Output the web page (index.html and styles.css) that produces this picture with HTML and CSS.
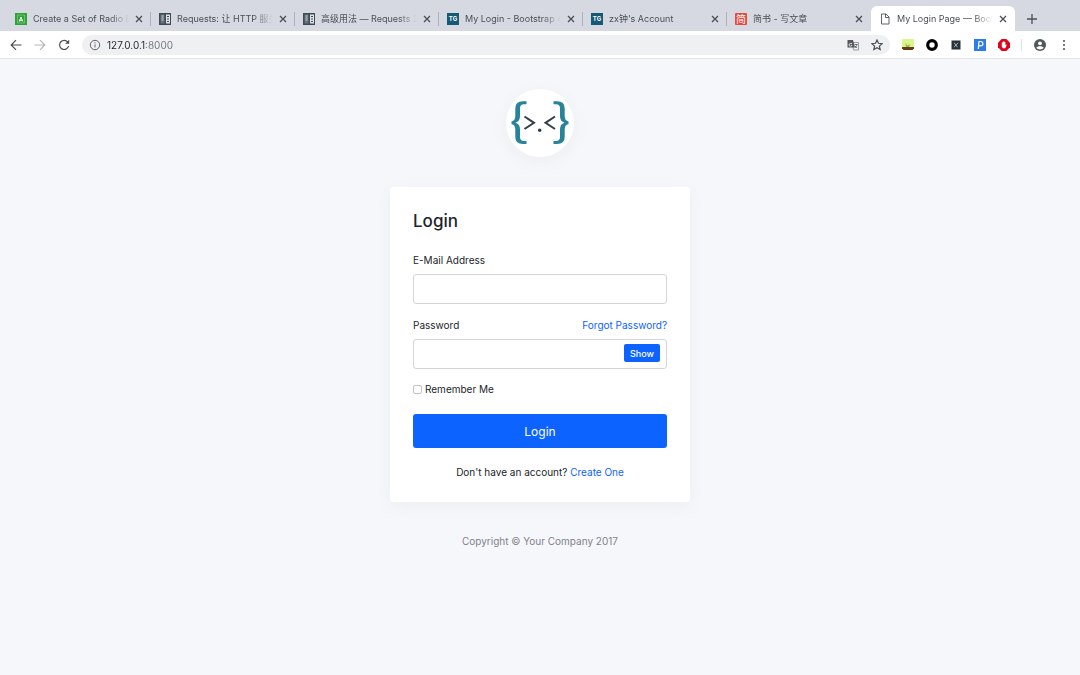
FILE: index.html
```html
<!DOCTYPE html>
<html lang="en">
<head>
<meta charset="utf-8">
<title>My Login Page</title>
<link rel="stylesheet" href="styles.css">
</head>
<body>
<div class="tabs">
	<div class="tab">
		<svg class="favicon" viewBox="0 0 12 12"><rect width="12" height="12" fill="#2fa336"/><path d="M2.500 2h7v8h-7z" fill="none" stroke="#7cc87c" stroke-width=".8"/><path d="M4.300 8.500L6 4l1.700 4.500M4.800 7.300h2.400" fill="none" stroke="#fff"/></svg>
		<a class="name" href="#">Create a Set of Radio Buttons</a>
		<button class="close" aria-label="Close"><svg viewBox="0 0 8 8"><path d="M1 1l6 6M7 1l-6 6"/></svg></button>
	</div>
	<div class="tab">
		<svg class="favicon" viewBox="0 0 12 12"><rect width="12" height="12" fill="#3f4a55"/><path d="M1.500 1.500h4v9h-4z" fill="#64707b"/><path d="M7 1.500h4v9h-4z" fill="#dfe3e7"/><path d="M2.500 3h2M2.500 5h2M2.500 7h2" stroke="#cfd6dc"/><path d="M8 3.500h2M8 6h2M8 8.500h2" stroke="#3f4a55"/></svg>
		<a class="name" href="#">Requests: 让 HTTP 服务人类</a>
		<button class="close" aria-label="Close"><svg viewBox="0 0 8 8"><path d="M1 1l6 6M7 1l-6 6"/></svg></button>
	</div>
	<div class="tab">
		<svg class="favicon" viewBox="0 0 12 12"><rect width="12" height="12" fill="#3f4a55"/><path d="M1.500 1.500h4v9h-4z" fill="#64707b"/><path d="M7 1.500h4v9h-4z" fill="#dfe3e7"/><path d="M2.500 3h2M2.500 5h2M2.500 7h2" stroke="#cfd6dc"/><path d="M8 3.500h2M8 6h2M8 8.500h2" stroke="#3f4a55"/></svg>
		<a class="name" href="#">高级用法 — Requests 2.18</a>
		<button class="close" aria-label="Close"><svg viewBox="0 0 8 8"><path d="M1 1l6 6M7 1l-6 6"/></svg></button>
	</div>
	<div class="tab">
		<span class="favicon letters">TG</span>
		<a class="name" href="#">My Login - Bootstrap 4 Login</a>
		<button class="close" aria-label="Close"><svg viewBox="0 0 8 8"><path d="M1 1l6 6M7 1l-6 6"/></svg></button>
	</div>
	<div class="tab">
		<span class="favicon letters">TG</span>
		<a class="name" href="#">zx钟's Account</a>
		<button class="close" aria-label="Close"><svg viewBox="0 0 8 8"><path d="M1 1l6 6M7 1l-6 6"/></svg></button>
	</div>
	<div class="tab last">
		<span class="favicon jian">简</span>
		<a class="name" href="#">简书 - 写文章</a>
		<button class="close" aria-label="Close"><svg viewBox="0 0 8 8"><path d="M1 1l6 6M7 1l-6 6"/></svg></button>
	</div>
	<div class="tab active">
		<svg class="favicon" viewBox="0 0 12 12" fill="none" stroke="#5f6368"><path d="M2.500 1h4.500l3 3v7h-7.500zM6.500 1v3.500h3.500"/></svg>
		<a class="name" href="#">My Login Page — Bootstrap 4</a>
		<button class="close" aria-label="Close"><svg viewBox="0 0 8 8"><path d="M1 1l6 6M7 1l-6 6"/></svg></button>
	</div>
	<button class="new" aria-label="New tab"><svg viewBox="0 0 10 10"><path d="M5 0v10M0 5h10"/></svg></button>
</div>

<div class="toolbar">
	<button class="tool" aria-label="Back"><svg viewBox="0 0 12 12"><path d="M11.500 6H1.500M6 1.200L1.200 6L6 10.800"/></svg></button>
	<button class="tool off" aria-label="Forward"><svg viewBox="0 0 12 12"><path d="M.5 6h10M6 1.200L10.800 6L6 10.800"/></svg></button>
	<button class="tool" aria-label="Reload"><svg viewBox="0 0 12 12"><path d="M10 3.300A4.600 4.600 0 1 0 10.600 7.200"/><path d="M11.200 .8v4h-4z" fill="#4a4d51" stroke="none"/></svg></button>
	<div class="address">
		<svg class="info" viewBox="0 0 12 12" fill="none" stroke="#5f6368"><circle cx="6" cy="6" r="4.700"/><path d="M6 5.400v3M6 3.300v1.100"/></svg>
		<input class="url" type="text" value="127.0.0.1:8000" aria-label="Address">
		<button class="tool" aria-label="Translate"><svg viewBox="0 0 12 12"><path d="M5 3.500h6.500v7.500h-5z" fill="#eef0f2" stroke="#85898d" stroke-width=".8"/><path d="M.5 1h5.500l2 7.500h-7.500z" fill="#55595d" stroke="none"/><path d="M5 4.500H3.300a1.400 1.400 0 1 0 1.600 1.400" stroke="#fff" stroke-width=".8"/><path d="M7.500 5.500h3M9 5v1M10.300 5.500L8 9M8 7l2 2" stroke-width=".7"/></svg></button>
		<button class="tool" aria-label="Bookmark"><svg viewBox="0 0 12 12"><path d="M6 1l1.500 3.300 3.600.4-2.700 2.400.8 3.500L6 8.800l-3.200 1.800.8-3.500L.9 4.700l3.600-.4z"/></svg></button>
	</div>
	<div class="extensions">
		<button class="tool" aria-label="Extension"><svg viewBox="0 0 12 12" stroke="none"><rect width="12" height="8" fill="#dcf58c"/><path d="M3.500 4l2 2.500 3-1.500-1.500 3h-3z" fill="#91bd45"/><path d="M0 8h12v1.500L10.500 11h-9L0 9.500z" fill="#6b3a14"/></svg></button>
		<button class="tool" aria-label="Extension"><svg viewBox="0 0 12 12"><circle cx="6" cy="6" r="4.300" stroke="#000" stroke-width="3.200"/></svg></button>
		<button class="tool" aria-label="Extension"><svg viewBox="0 0 12 12"><rect x="1.500" y="1.500" width="9" height="9" fill="#263238" stroke="none"/><path d="M4.200 3.800l3.200 4.400M8 3.800L4 8.200" stroke="#b9c2c7" stroke-width=".9"/></svg></button>
		<button class="tool" aria-label="Extension"><svg viewBox="0 0 12 12"><rect width="12" height="12" fill="#2b7de9" stroke="none"/><path d="M4.300 10L5 2.500h1.700a2.200 2.200 0 0 1 0 4.400h-2" stroke="#fff" stroke-width="1.200"/></svg></button>
		<button class="tool" aria-label="Extension"><svg viewBox="0 0 12 12" stroke="none"><path d="M3.700 0h4.600L12 3.700v4.600L8.300 12H3.700L0 8.300V3.700z" fill="#e0041a"/><path d="M3.800 5.500V3.400h.9V2.700h.9V2.300h.9v.6h.9v3.500l.8-.8.5.5-1.400 3.200H5L3.800 7.800z" fill="#fff"/></svg></button>
	</div>
	<div class="menu">
		<button class="tool" aria-label="Profile"><svg viewBox="0 0 12 12" stroke="none"><circle cx="6" cy="6" r="6" fill="#54585c"/><circle cx="6" cy="4.300" r="1.900" fill="#fff"/><path d="M2.300 8.800c1-2.200 6.400-2.200 7.400 0-1.600 2.200-5.800 2.200-7.400 0z" fill="#fff"/></svg></button>
		<button class="tool" aria-label="Menu"><svg viewBox="0 0 12 12" stroke="none"><circle cx="6" cy="2" r="1.100"/><circle cx="6" cy="6" r="1.100"/><circle cx="6" cy="10" r="1.100"/></svg></button>
	</div>
</div>

<div class="page">
	<div class="brand">
		<svg viewBox="0 0 68 68" fill="none">
			<g fill="#26839a">
				<path d="M20.500 12.300V15.300H18Q14 15.300 14 19.500V27Q14 32.500 9.500 33.700Q14 35 14 40.500V48Q14 52 18 52H20.500V55H17Q9.300 55 9.300 48V40.500Q9.300 35.800 5.500 35V32.400Q9.300 31.600 9.300 27V19.500Q9.300 12.300 17 12.300z"/>
				<path d="M47.500 12.300V15.300H50Q54 15.300 54 19.500V27Q54 32.500 58.500 33.700Q54 35 54 40.500V48Q54 52 50 52H47.500V55H51Q58.700 55 58.700 48V40.500Q58.700 35.800 62.500 35V32.400Q58.700 31.600 58.700 27V19.500Q58.700 12.300 51 12.300z"/>
			</g>
			<path d="M18.500 27.500l9.500 6.300-9.500 6.200M49 27.500l-9.500 6.300 9.500 6.200" stroke="#333e4b" stroke-width="2"/>
			<circle cx="33.700" cy="41.300" r="1.700" fill="#2d3a47"/>
		</svg>
	</div>
	<div class="card">
		<h4 class="title">Login</h4>
		<form>
			<div class="row"><label for="email">E-Mail Address</label></div>
			<input id="email" class="field" type="email">
			<div class="row">
				<label for="password">Password</label>
				<a href="#">Forgot Password?</a>
			</div>
			<div class="password">
				<input id="password" class="field" type="password">
				<button class="show" type="button">Show</button>
			</div>
			<div class="remember">
				<input id="remember" type="checkbox">
				<label for="remember">Remember Me</label>
			</div>
			<button class="login" type="submit">Login</button>
			<div class="create">Don't have an account? <a href="#">Create One</a></div>
		</form>
	</div>
	<div class="footer">Copyright © Your Company 2017</div>
</div>
</body>
</html>
```
FILE: styles.css
```css
*{ box-sizing:border-box;}
body{ margin:0; background:#f6f7fb; color:#212529; font:10px/14px Inter, "Noto Sans CJK SC", sans-serif;}
button, input{ font-family:inherit; margin:0;}
button{ border:0; padding:0; background:none; cursor:pointer;}
a{ color:#0d63ff; text-decoration:none;}
svg{ display:block;}

/* tab strip */
.tabs{ display:flex; height:31px; padding:6px 7px 0; background:#d6d9e1;}
.tab{ display:flex; align-items:center; flex:0 1 144px; min-width:0; padding:0 7px 0 8px; position:relative;}
.tab:after{ content:""; position:absolute; right:0; top:6px; width:1px; height:14px; background:#aeb1b9;}
.tab.last:after, .tab.active:after{ display:none;}
.tab.active{ background:#fff; border-radius:6px 6px 0 0;}
.favicon{ width:12px; height:12px; flex:none;}
.letters{ background:#155a75; color:#fff; font-size:6px; line-height:12px; font-weight:700; text-align:center;}
.jian{ background:#e6483c; color:#fff; border-radius:1px; font-size:10px; line-height:12px; text-align:center;}
.name{ flex:1; min-width:0; margin:0 5px 0 6px; overflow:hidden; white-space:nowrap; font-size:9px; color:#4b4f56; -webkit-mask-image:linear-gradient(to right, #000 80%, transparent); mask-image:linear-gradient(to right, #000 80%, transparent);}
.close{ width:10px; height:10px; padding:1px; flex:none;}
.close svg, .new svg{ fill:none; stroke:#4b4f56; stroke-width:1.3;}
.new{ width:10px; height:10px; margin:8px 0 0 12px; flex:none;}

/* toolbar */
.toolbar{ display:flex; align-items:center; gap:12px; height:28px; padding:0 10px; background:#fff; border-bottom:1px solid #e3e5e9;}
.tool{ width:12px; height:12px; flex:none;}
.tool svg{ width:12px; height:12px; fill:none; stroke:#4a4d51; stroke-width:1.2;}
.tool svg[stroke="none"]{ stroke:none;}
.tool.off svg{ stroke:#b5b8bb;}
.address{ flex:1; display:flex; align-items:center; gap:12px; height:20px; padding:0 7px; border-radius:10px; background:#eff0f2;}
.info{ width:12px; height:12px; flex:none;}
.url{ flex:1; min-width:0; height:14px; margin-left:-6px; border:0; padding:0; outline:0; font-size:10px; color:transparent; background:linear-gradient(to right, #212529 39px, #70757a 39px); -webkit-background-clip:text; background-clip:text;}
.extensions{ display:flex; gap:12px; padding-right:11px; border-right:1px solid #dfe1e4;}
.menu{ display:flex; gap:12px;}
.menu .tool:last-child svg{ fill:#54585c;}

/* login page */
.page{ display:flex; flex-direction:column; align-items:center; padding:30px 0;}
.brand{ width:68px; height:68px; margin-bottom:30px; border-radius:50%; background:#fff; box-shadow:0 4px 20px rgba(0,0,0,.04);}
.card{ width:100%; max-width:300px; padding:23px; border-radius:3px; background:#fff; box-shadow:0 4px 20px rgba(0,0,0,.04);}
.title{ margin:0 0 21px; font-size:17px; line-height:22px; font-weight:500;}
.row{ display:flex; justify-content:space-between; margin-bottom:7px;}
.field{ display:block; width:100%; height:30px; padding:0 10px; border:1px solid #d3d5d8; border-radius:3px; background:#fff; font-size:12px;}
.field + .row{ margin-top:14px;}
.password{ position:relative;}
.show{ position:absolute; right:7px; top:5px; width:36px; height:18px; border-radius:2px; background:#0d63ff; color:#fff; font-size:9px; font-weight:500;}
.remember{ display:flex; align-items:center; gap:3px; margin:13px 0 18px;}
.remember input{ appearance:none; width:9px; height:9px; border:1px solid #bfc2c5; border-radius:2px; background:#fff;}
.remember input:checked{ background:#0d63ff;}
.login{ display:block; width:100%; height:34px; border-radius:3px; background:#0d63ff; color:#fff; font-size:12px;}
.create{ margin-top:17px; text-align:center;}
.footer{ margin-top:32px; color:#7f8388;}
```
